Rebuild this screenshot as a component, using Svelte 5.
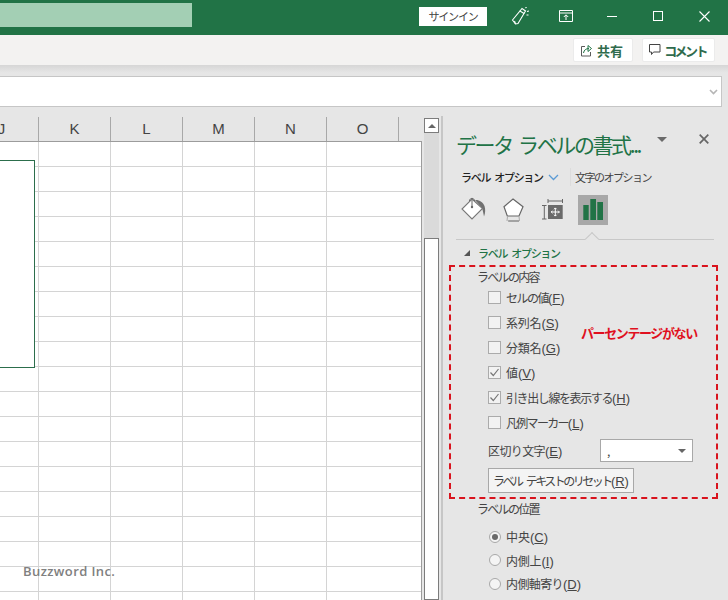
<script>
  const cols = ['J', 'K', 'L', 'M', 'N', 'O', ''];
  const checks = [
    ['セルの値', 'F', false, -1.5],
    ['系列名', 'S', false, -0.2],
    ['分類名', 'G', false, -0.2],
    ['値', 'V', true, 0],
    ['引き出し線を表示する', 'H', true, -1.4],
    ['凡例マーカー', 'L', false, -1.7]
  ];
  const radios = [
    ['中央', 'C', true, 0],
    ['内側上', 'I', false, -0.2],
    ['内側軸寄り', 'D', false, -0.6]
  ];
</script>

<div class="app">
  <header class="titlebar">
    <div class="search"></div>
    <button class="signin">サインイン</button>
    <div class="winicons">
      <svg class="popper" width="18" height="18" viewBox="0 0 18 18" fill="none" stroke="#fff" stroke-width="1.100">
        <path d="M1.500 13 9 4l4 2.500L7 16.500l-2.500.5z" />
        <path d="M9 4l2-2.500 3.500 2.500-1.500 2.500M4.500 17l-1-3M14.500 1l1-1M16 4.500l2-.5M15.500 8h2" />
      </svg>
      <svg class="ribbonmode" width="14" height="12" viewBox="0 0 14 12" fill="none" stroke="#fff" stroke-width="1">
        <path d="M.5.500h13v11H.5zM.5 3h13M7 10V5M4.800 7 7 4.800 9.200 7" />
      </svg>
      <span class="minimize"></span>
      <span class="maximize"></span>
      <svg class="closex" width="11" height="11" viewBox="0 0 11 11" stroke="#fff" stroke-width="1.100"><path d="M.5.500l10 10M10.500.500l-10 10" /></svg>
    </div>
  </header>

  <div class="ribbon">
    <button class="rbtn share">
      <svg width="13" height="13" viewBox="0 0 13 13" fill="none" stroke="#5a5a5a" stroke-width="1"><path d="M5 2.500H1.500v9.500h9V8" /><path d="M3.500 9c.5-3 2.500-4.500 5.500-4.500M8 1.500l3.500 3-3.500 3z" stroke="#217346" /></svg>
      <b>共有</b>
    </button>
    <button class="rbtn comment">
      <svg width="12" height="12" viewBox="0 0 12 12" fill="none" stroke="#444" stroke-width="1"><path d="M.5.500h10.500v7.500H4.500L2.500 10.500V8h-2z" /></svg>
      <b>コメント</b>
    </button>
  </div>
  <div class="shade"></div>

  <div class="formula">
    <svg width="9" height="6" viewBox="0 0 9 6" fill="none" stroke="#b5b5b5" stroke-width="1.600"><path d="M1 1l3.500 3.500L8 1" /></svg>
  </div>

  <main class="main">
    <section class="sheet">
      <div class="colheads">
        {#each cols as c}
          <div class="col" class:last={c === ''} class:first={c === 'J'}>{c}</div>
        {/each}
      </div>
      <div class="cells">
        <div class="chart"></div>
      </div>
    </section>

    <div class="vscroll">
      <div class="up"><span></span></div>
      <div class="track"></div>
      <div class="thumb"></div>
    </div>

    <aside class="panel">
      <div class="ptitle">
        <h1>データ ラベルの書式...</h1>
        <span class="pdrop"></span>
        <svg class="pclose" width="10" height="10" viewBox="0 0 10 10" stroke="#666" stroke-width="1.700"><path d="M.7.700l8.600 8.600M9.300.700.7 9.300" /></svg>
      </div>
      <div class="tabs">
        <span class="tab on">ラベル オプション</span>
        <svg class="chev" width="11" height="7" viewBox="0 0 11 7" fill="none" stroke="#5b9bd5" stroke-width="1.300"><path d="M1 1l4.500 4.500L10 1" /></svg>
        <span class="tabsep"></span>
        <span class="tab">文字のオプション</span>
      </div>
      <div class="icons">
        <div class="ic">
          <svg width="30" height="30" viewBox="0 0 30 30">
            <path d="M17 5C21 4.500 25 7 26.500 11 27.500 14 27.500 18 26 21.500 25.500 19 25 16 24 13z" fill="#707070" />
            <path d="M14 4 24.500 13.500 14 24 4 14z" fill="#fff" stroke="#777" stroke-width="1.100" />
            <path d="M11.500 6C11.500 2.500 16.500 2.500 16.500 6M14 5v6" stroke="#666" stroke-width="1" fill="none" />
            <circle cx="14" cy="12" r="1.200" fill="#666" />
          </svg>
        </div>
        <div class="ic">
          <svg width="30" height="30" viewBox="0 0 30 30">
            <path d="M15 4 25 11.700 21 21H9.300L6 11.700z" fill="#fff" stroke="#666" stroke-width="1.200" />
            <path d="M10 26h11" stroke="#777" stroke-width="1.200" />
            <path d="M9.500 21.500 9 26M21 21.500l.5 4.500" stroke="#aaa" stroke-width="1" />
          </svg>
        </div>
        <div class="ic">
          <svg width="30" height="30" viewBox="0 0 30 30">
            <path d="M10 6h14.500M10 4v4M24.500 4v4M4 10.500h4.500M4 24h4.500M6.300 10.500V24" stroke="#666" stroke-width="1" fill="none" />
            <rect x="10" y="10" width="14.700" height="14" fill="#6a6a6a" />
            <path d="M17.300 13v8M13.300 17h8" stroke="#fff" stroke-width="1" />
            <path d="M16 14.200l1.300-1.300 1.300 1.300M16 19.800l1.300 1.300 1.300-1.300M14.500 15.700 13.200 17l1.300 1.300M20.100 15.700l1.300 1.300-1.300 1.300" stroke="#fff" stroke-width="1" fill="none" />
          </svg>
        </div>
        <div class="ic active">
          <svg width="30" height="30" viewBox="0 0 30 30" fill="#217346">
            <rect x="5.300" y="10" width="5.400" height="15" />
            <rect x="12.300" y="4" width="5.700" height="21" />
            <rect x="19.300" y="7" width="5.700" height="18" />
          </svg>
        </div>
      </div>
      <div class="rule"><span class="notch"></span></div>

      <div class="sechead"><span class="tri"></span><span>ラベル オプション</span></div>
      <div class="group-label">ラベルの内容</div>
      <div class="checks">
        {#each checks as [t, k, on, ls]}
          <label class="row">
            <span class="cb">
              {#if on}
                <svg width="11" height="11" viewBox="0 0 11 11" fill="none" stroke="#777" stroke-width="1.200"><path d="M1.500 5.500 4.300 8.500 9.500 2" /></svg>
              {/if}
            </span>
            <span><span style="letter-spacing: {ls}px">{t}</span><span class="key">(<u>{k}</u>)</span></span>
          </label>
        {/each}
      </div>
      <div class="seprow">
        <span><span class="sepname">区切り文字</span><span class="key">(<u>E</u>)</span></span>
        <div class="select"><span>,</span><i></i></div>
      </div>
      <button class="reset"><span class="resetname">ラベル テキストのリセット</span><span class="key">(<u>R</u>)</span></button>
      <div class="group-label pos">ラベルの位置</div>
      <div class="radios">
        {#each radios as [t, k, on, ls]}
          <label class="row radio">
            <span class="rd" class:on></span>
            <span><span style="letter-spacing: {ls}px">{t}</span><span class="key">(<u>{k}</u>)</span></span>
          </label>
        {/each}
      </div>
    </aside>
  </main>

  <div class="redbox"></div>
  <div class="note">パーセンテージがない</div>
  <div class="mark">Buzzword Inc.</div>
</div>

<style>
  :global(body) {
    margin: 0;
    overflow: hidden;
  }
  .app {
    position: relative;
    width: 728px;
    height: 600px;
    overflow: hidden;
    background: #e6e6e6;
    font-family: "Noto Sans CJK JP", sans-serif;
    font-size: 12px;
    color: #444;
    display: flex;
    flex-direction: column;
  }
  .key {
    font-family: "Liberation Sans", sans-serif;
    font-size: 13px;
  }
  .titlebar {
    height: 35px;
    flex: none;
    background: #217346;
    display: flex;
    align-items: center;
  }
  .search {
    width: 192px;
    height: 24px;
    margin-top: -5px;
    background: #a3cfb4;
  }
  .signin {
    margin: -3px 0 0 227px;
    width: 68px;
    height: 19px;
    padding: 0;
    border: 0;
    background: #fff;
    font: 11px/19px "Noto Sans CJK JP", sans-serif;
    letter-spacing: -1.200px;
    color: #444;
  }
  .winicons {
    display: flex;
    align-items: center;
    margin-top: -3px;
  }
  .popper {
    margin-left: 24px;
    flex: none;
  }
  .ribbonmode {
    margin-left: 30px;
    flex: none;
  }
  .minimize {
    width: 10px;
    height: 1px;
    margin-left: 34px;
    background: #fff;
    flex: none;
  }
  .maximize {
    width: 8px;
    height: 8px;
    margin-left: 36px;
    border: 1px solid #fff;
    flex: none;
  }
  .closex {
    margin-left: 36px;
    flex: none;
  }
  .ribbon {
    height: 30px;
    flex: none;
    background: #f3f2f1;
    display: flex;
    justify-content: flex-end;
    align-items: flex-start;
    padding: 3px 13px 0 0;
    box-sizing: border-box;
    gap: 9px;
  }
  .rbtn {
    height: 24px;
    padding: 0;
    border: 1px solid #ebebeb;
    border-radius: 2px;
    background: #fff;
    display: flex;
    align-items: center;
    justify-content: center;
    font-family: "Noto Sans CJK JP", sans-serif;
    color: #2f6b4d;
    font-size: 13px;
  }
  .rbtn b {
    font-weight: 700;
  }
  .share {
    width: 60px;
    gap: 4px;
    padding-right: 3px;
  }
  .comment {
    width: 73px;
    gap: 3px;
    letter-spacing: -2.600px;
    padding-right: 2px;
  }
  .shade {
    height: 11px;
    flex: none;
    background: linear-gradient(#d6d6d6, #e6e6e6 70%);
  }
  .formula {
    height: 31px;
    flex: none;
    box-sizing: border-box;
    margin-right: 6px;
    background: #fff;
    border: 1px solid #c6c6c6;
    border-left: 0;
    display: flex;
    align-items: center;
    justify-content: flex-end;
    padding-right: 3px;
  }
  .main {
    flex: 1;
    display: flex;
    margin-top: 10px;
    min-height: 0;
  }
  .sheet {
    width: 422px;
    flex: none;
    display: flex;
    flex-direction: column;
  }
  .colheads {
    height: 25px;
    flex: none;
    box-sizing: border-box;
    display: flex;
    border-bottom: 1px solid #9c9c9c;
    font: 15px/24px "Liberation Sans", sans-serif;
    color: #444;
    background: #e6e6e6;
  }
  .col {
    width: 72px;
    box-sizing: border-box;
    text-align: center;
    position: relative;
    border-right: 1px solid #a8a8a8;
  }
  .col.first {
    width: 39px;
    text-indent: -35px;
    overflow: hidden;
  }
  .col.last {
    width: 23px;
    border-right: 0;
  }
  .cells {
    flex: 1;
    position: relative;
    background-color: #fff;
    background-image:
      repeating-linear-gradient(to right, transparent 0 71px, #d4d4d4 71px 72px),
      repeating-linear-gradient(to bottom, transparent 0 24px, #d4d4d4 24px 25px);
    background-size: auto;
    background-position: -33px 0, 0 0;
    border-right: 1px solid #9c9c9c;
  }
  .chart {
    position: absolute;
    left: -2px;
    top: 18px;
    width: 37px;
    height: 208px;
    background: #fff;
    border: 1px solid #2c6e4c;
    box-sizing: border-box;
  }
  .vscroll {
    width: 15px;
    flex: none;
    margin: 1px 0 0 2px;
    display: flex;
    flex-direction: column;
  }
  .up {
    height: 15px;
    flex: none;
    background: #fff;
    border: 1px solid #7c7c7c;
    box-sizing: border-box;
    display: flex;
    align-items: center;
    justify-content: center;
  }
  .up span {
    width: 0;
    height: 0;
    border: 4px solid transparent;
    border-top: 0;
    border-bottom: 4px solid #666;
  }
  .track {
    height: 105px;
    flex: none;
    background: #dadada;
  }
  .thumb {
    flex: 1;
    background: #fff;
    border: 1px solid #7c7c7c;
    box-sizing: border-box;
  }
  .panel {
    flex: 1;
    margin-left: 2px;
    margin-top: -1px;
    padding: 11px 0 0 13px;
    border-left: 2px solid #c6c6c6;
    box-sizing: border-box;
    min-width: 0;
  }
  .ptitle {
    display: flex;
    align-items: center;
    height: 34px;
  }
  h1 {
    margin: 0;
    font-size: 21px;
    line-height: 34px;
    font-weight: 400;
    color: #217346;
    white-space: nowrap;
    letter-spacing: -2.400px;
    word-spacing: 4px;
    width: 201px;
    flex: none;
  }
  .pdrop {
    width: 0;
    height: 0;
    border: 5px solid transparent;
    border-top: 5px solid #6a6a6a;
    border-bottom: 0;
    margin: -9px 0 0 0;
    flex: none;
  }
  .pclose {
    margin: -10px 0 0 32px;
    flex: none;
  }
  .tabs {
    display: flex;
    align-items: center;
    height: 26px;
    padding-left: 5px;
    margin-top: 3px;
  }
  .tab {
    font-size: 11px;
    white-space: nowrap;
    letter-spacing: -1.500px;
  }
  .tab.on {
    color: #222;
    font-weight: 500;
    letter-spacing: -1.300px;
    word-spacing: 3px;
    width: 87px;
    flex: none;
  }
  .chev {
    flex: none;
  }
  .tabsep {
    width: 1px;
    height: 18px;
    background: #dcdcdc;
    margin: 0 4px 0 11px;
    flex: none;
  }
  .icons {
    display: flex;
    gap: 10px;
    margin-top: 5px;
    padding-left: 2px;
  }
  .ic {
    width: 30px;
    height: 30px;
  }
  .ic.active {
    background: #a8a8a8;
  }
  .rule {
    position: relative;
    height: 1px;
    background: #c8c8c8;
    margin: 14px 14px 0 0;
  }
  .notch {
    position: absolute;
    left: 131px;
    top: -5px;
    width: 10px;
    height: 10px;
    box-sizing: border-box;
    background: #e6e6e6;
    border: 1px solid #c8c8c8;
    border-right: 0;
    border-bottom: 0;
    transform: rotate(45deg);
  }
  .sechead {
    display: flex;
    align-items: center;
    height: 20px;
    margin-top: 3px;
    padding-left: 8px;
    color: #217346;
    font-weight: 500;
    letter-spacing: -1.300px;
    word-spacing: 3px;
    font-size: 11px;
  }
  .tri {
    width: 0;
    height: 0;
    border-left: 6px solid transparent;
    border-bottom: 6px solid #555;
    margin-right: 8px;
  }
  .group-label {
    padding-left: 21px;
    height: 20px;
    line-height: 20px;
    margin-top: 4px;
    white-space: nowrap;
    letter-spacing: -1.700px;
  }
  .checks {
    margin-top: -2px;
    padding-left: 32px;
  }
  .row {
    display: flex;
    align-items: center;
    height: 25px;
    white-space: nowrap;
  }
  u {
    text-underline-offset: 1px;
  }
  .cb {
    width: 13px;
    height: 13px;
    box-sizing: border-box;
    border: 1px solid #ababab;
    background: #f2f2f2;
    margin-right: 5px;
    display: flex;
    align-items: center;
    justify-content: center;
    flex: none;
  }
  .seprow {
    display: flex;
    align-items: center;
    padding-left: 32px;
    height: 23px;
    margin-top: 4px;
  }
  .sepname {
    letter-spacing: -0.600px;
  }
  .seprow > span {
    width: 112px;
    flex: none;
  }
  .select {
    width: 93px;
    height: 23px;
    box-sizing: border-box;
    border: 1px solid #a8a8a8;
    background: #fff;
    display: flex;
    align-items: center;
    justify-content: space-between;
    padding: 0 6px;
  }
  .select i {
    width: 0;
    height: 0;
    border: 4px solid transparent;
    border-top: 4px solid #666;
    border-bottom: 0;
  }
  .reset {
    display: block;
    margin: 6px 0 0 32px;
    width: 146px;
    height: 25px;
    padding: 0;
    box-sizing: border-box;
    border: 1px solid #a8a8a8;
    background: #f4f4f4;
    font: 12px "Noto Sans CJK JP", sans-serif;
    color: #444;
    white-space: nowrap;
  }
  .resetname {
    letter-spacing: -2.500px;
    word-spacing: 4px;
  }
  .group-label.pos {
    margin-top: 6px;
  }
  .radios {
    margin-top: 6px;
    padding-left: 33px;
  }
  .row.radio {
    height: 23.500px;
  }
  .rd {
    width: 12px;
    height: 12px;
    box-sizing: border-box;
    border: 1px solid #a8a8a8;
    border-radius: 50%;
    background: #f4f4f4;
    margin-right: 5px;
    flex: none;
    display: flex;
    align-items: center;
    justify-content: center;
  }
  .rd.on::after {
    content: "";
    width: 6px;
    height: 6px;
    border-radius: 50%;
    background: #6a6a6a;
  }
  .redbox {
    position: absolute;
    left: 449px;
    top: 265px;
    width: 269px;
    height: 234px;
    box-sizing: border-box;
    border: 2px dashed #d9131d;
  }
  .note {
    position: absolute;
    left: 581px;
    top: 324px;
    font-size: 13px;
    line-height: 18px;
    font-weight: 700;
    color: #e01020;
    letter-spacing: -1.400px;
    white-space: nowrap;
  }
  .mark {
    position: absolute;
    left: 23px;
    top: 563px;
    font: 600 13px/16px "Open Sans", sans-serif;
    letter-spacing: 0.400px;
    color: #808080;
  }
</style>
